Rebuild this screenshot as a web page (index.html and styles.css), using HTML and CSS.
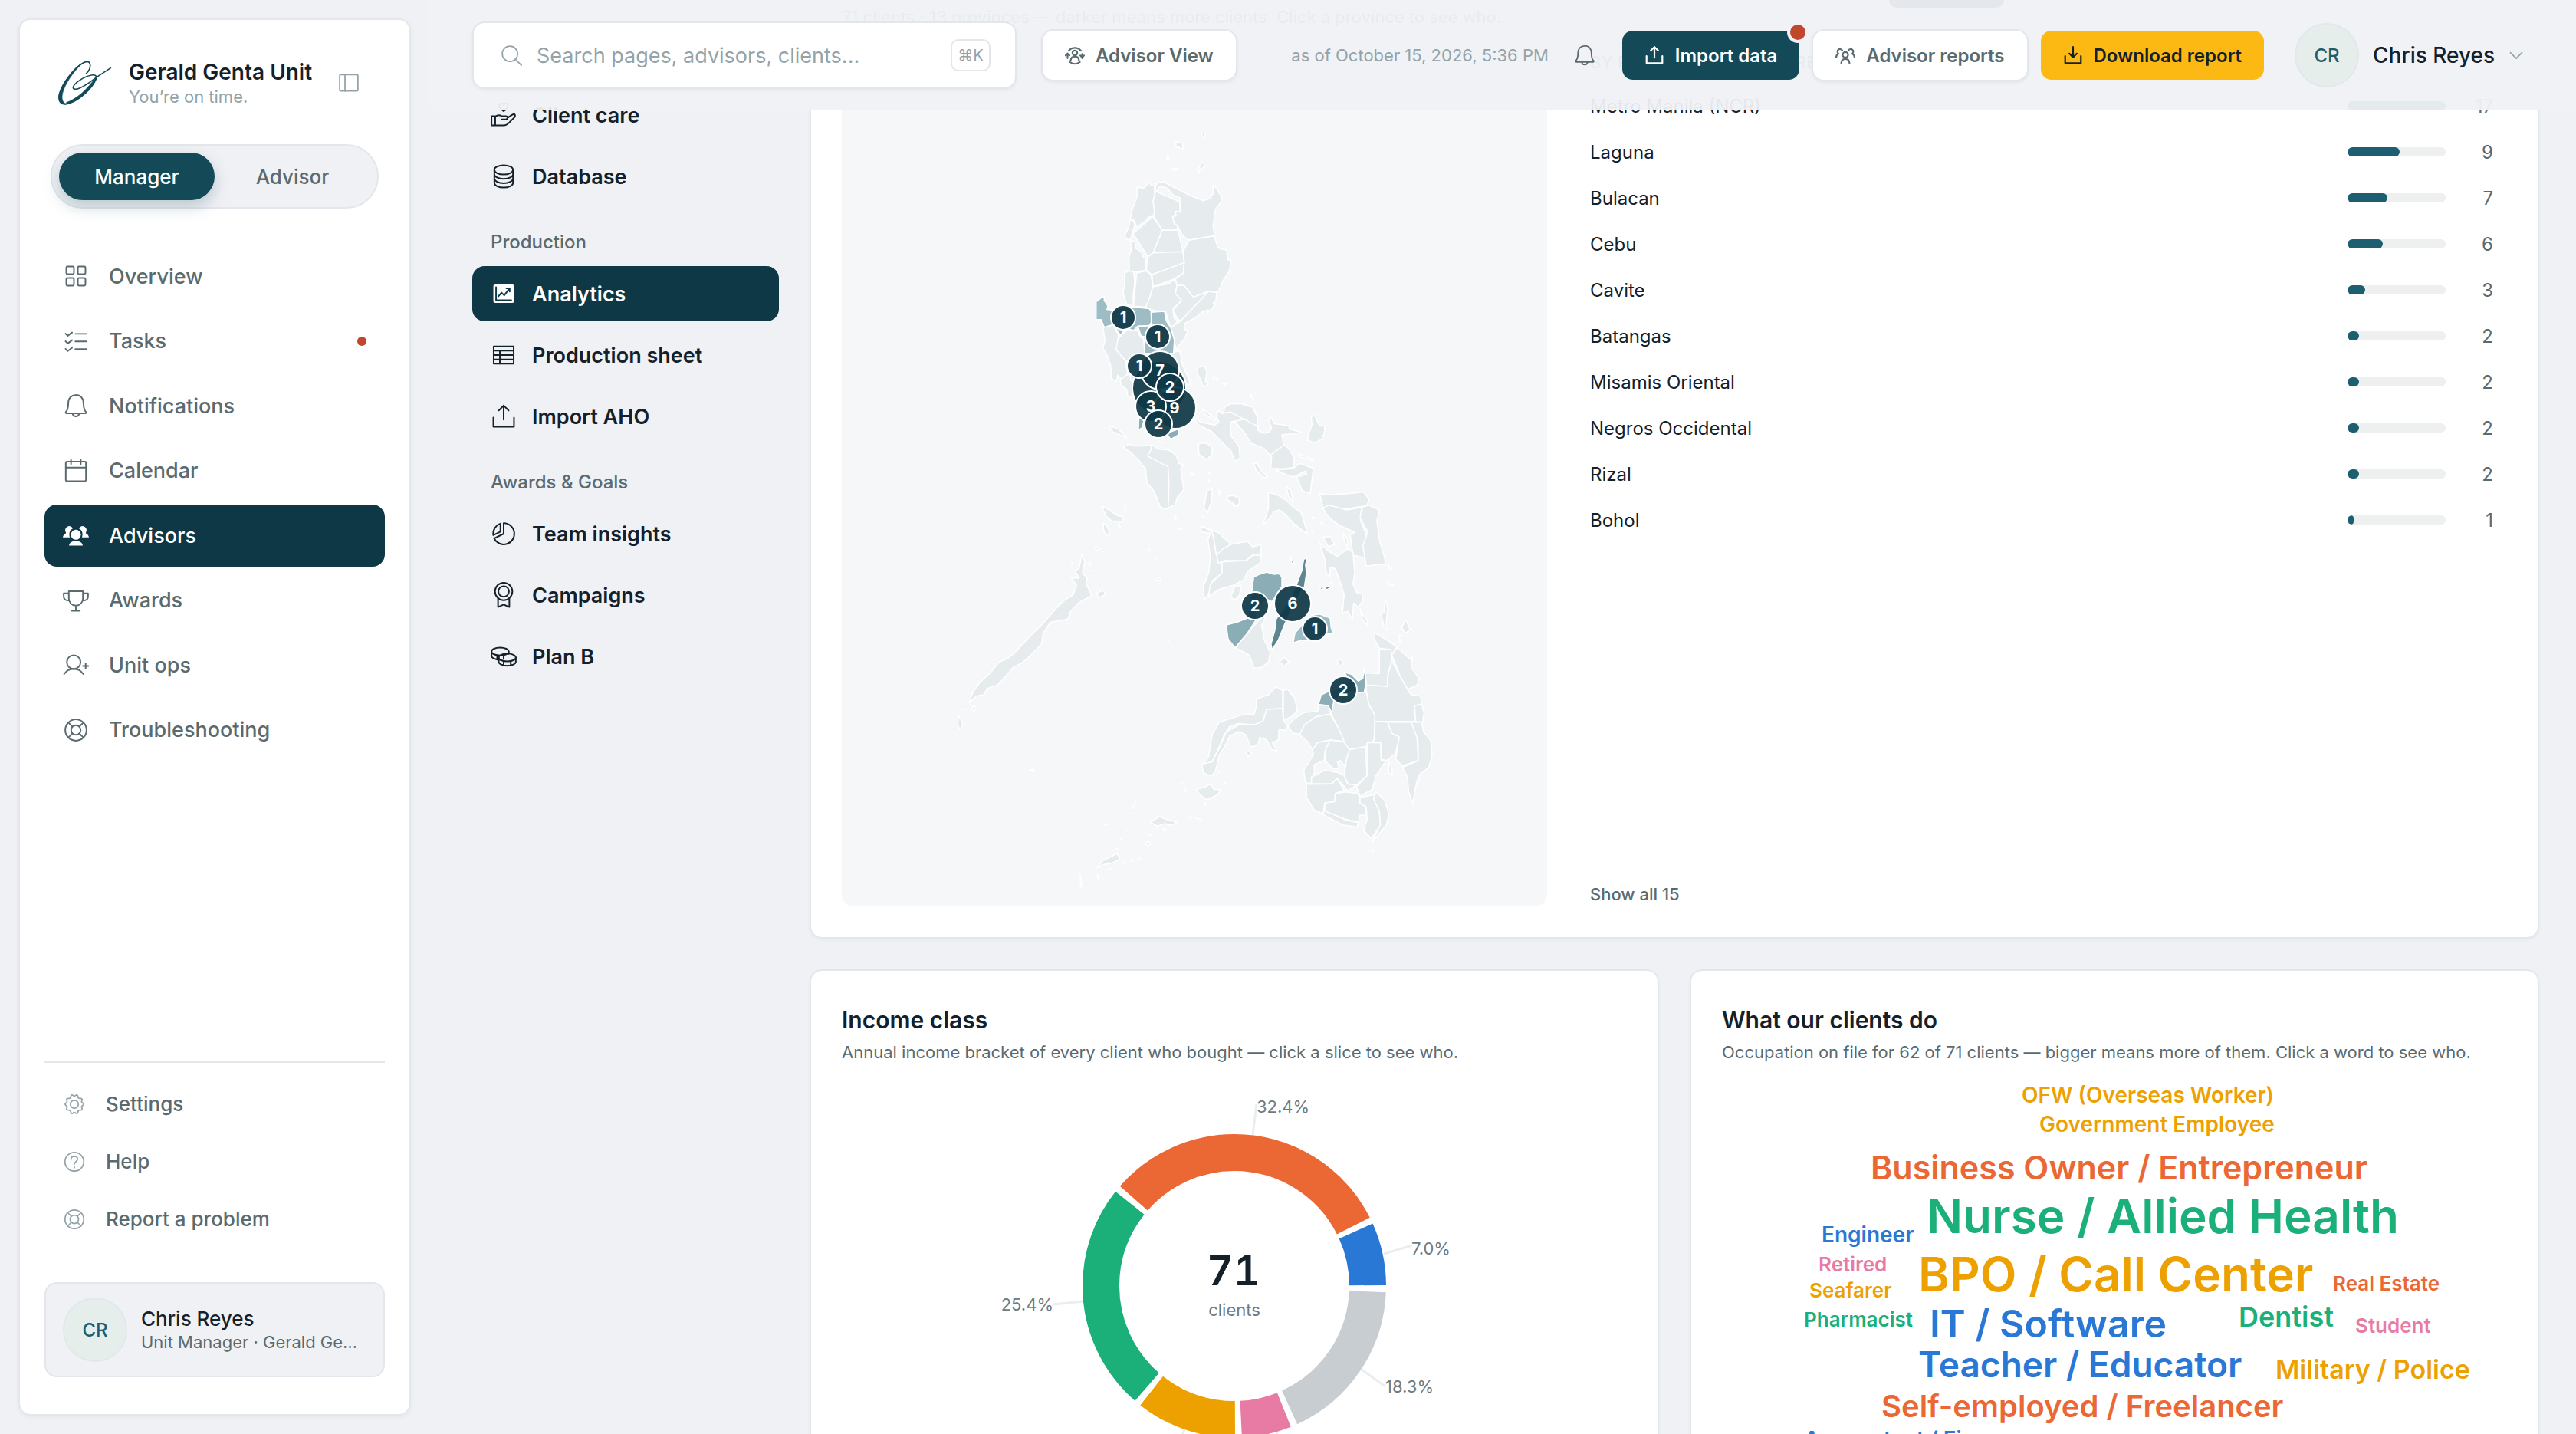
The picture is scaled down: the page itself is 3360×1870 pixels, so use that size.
FILE: index.html
```html
<!DOCTYPE html>
<html lang="en">
<head>
<meta charset="utf-8">
<meta name="viewport" content="width=device-width, initial-scale=1">
<title>Analytics · Gerald Genta Unit</title>
<link rel="stylesheet" href="styles.css">
</head>
<body>
<svg class="sprite" aria-hidden="true">
  <symbol id="i-panel" viewBox="0 0 24 24"><rect x="2.5" y="3.500" width="19" height="17" rx="1"/><path d="M8 3.500v17"/></symbol>
  <symbol id="i-grid" viewBox="0 0 24 24"><rect x="3.2" y="3.2" width="7" height="7" rx="1"/><rect x="13.8" y="3.2" width="7" height="7" rx="1"/><rect x="3.2" y="13.8" width="7" height="7" rx="1"/><rect x="13.8" y="13.8" width="7" height="7" rx="1"/></symbol>
  <symbol id="i-tasks" viewBox="0 0 24 24"><path d="M2.5 5l2 2 4-3M2.5 12l2 2 4-3M2.5 19l2 2 4-3M11.5 5.2H22M11.5 12.2H22M11.5 19.2H22"/></symbol>
  <symbol id="i-bell" viewBox="0 0 24 24"><path d="M12 2.2c-4.4 0-7 3.2-7 7.4 0 4.4-.8 7-2.300 8.200-.3.9 0 1.300.7 1.300h17.200c.7 0 1-.4.7-1.300-1.500-1.200-2.300-3.800-2.300-8.200 0-4.200-2.600-7.400-7-7.400zM9 19.600c.4 1.500 1.500 2.300 3 2.300s2.600-.8 3-2.300"/></symbol>
  <symbol id="i-cal" viewBox="0 0 24 24"><rect x="2.700" y="3.500" width="18.600" height="18" rx="1"/><path d="M2.700 9h18.600M7.500 1.800v4M16.500 1.800v4"/></symbol>
  <symbol id="i-people-fill" viewBox="0 0 24 24"><g fill="currentColor" stroke="none"><circle cx="12" cy="11.500" r="4.600"/><path d="M5.700 21.500c.3-2.600 3-4.300 6.300-4.300s6 1.700 6.300 4.300z"/><path d="M5.500 3.500a4 4 0 0 1 3.600 2.300A6 6 0 0 0 6 11.800c0 .8.200 1.500.4 2.200H0c.2-2 1.300-3.300 3-4A4 4 0 0 1 5.500 3.500zM18.500 3.500a4 4 0 0 0-3.600 2.300 6 6 0 0 1 3.100 6c0 .8-.2 1.500-.4 2.200H24c-.2-2-1.300-3.300-3-4a4 4 0 0 0-2.500-6.500z"/></g></symbol>
  <symbol id="i-people" viewBox="0 0 24 24"><circle cx="12" cy="11.500" r="3.300"/><path d="M7 21.500c.3-3.300 2.200-5 5-5s4.700 1.700 5 5M8.300 6.200a3.100 3.100 0 1 0-4.500 4C2 11 1 12.500 1 14.500M15.700 6.200a3.100 3.100 0 1 1 4.500 4c1.800.8 2.800 2.300 2.800 4.300"/></symbol>
  <symbol id="i-trophy" viewBox="0 0 24 24"><path d="M5.500 3.500h13v6.800a6.500 6.500 0 0 1-13 0zM5.500 5.500H.8v3c0 2.500 2 3.700 5 3.500M18.500 5.500h4.700v3c0 2.500-2 3.700-5 3.500M12 17v4.500M8.300 21.500h7.400"/></symbol>
  <symbol id="i-userplus" viewBox="0 0 24 24"><circle cx="10" cy="9.500" r="6.300"/><path d="M1.200 20.500c2-3 5-4.800 8.800-4.800s6.800 1.800 8.800 4.800M18.500 13h5M21 10.500v5"/></symbol>
  <symbol id="i-buoy" viewBox="0 0 24 24"><circle cx="12" cy="12" r="9.800"/><circle cx="12" cy="12" r="4.400"/><path d="M5 5l3.800 3.800M19 5l-3.800 3.800M5 19l3.800-3.800M19 19l-3.800-3.800"/></symbol>
  <symbol id="i-gear" viewBox="0 0 24 24"><circle cx="12" cy="12" r="4.200"/><path d="M9.300 2.300c1-.4 1.700 1.300 2.700 1.300s1.700-1.700 2.700-1.300c1.500.6.800 2.600 1.700 3.300s2.700-.4 3.600.8c.8 1-.8 2-.4 3.200s2.100 1.400 2.100 2.400-1.700 1.200-2.100 2.400 1.200 2.200.4 3.200c-.9 1.200-2.700.1-3.600.8s-.2 2.700-1.700 3.300c-1 .4-1.700-1.300-2.700-1.300s-1.700 1.700-2.700 1.300c-1.500-.6-.8-2.600-1.700-3.300s-2.700.4-3.600-.8c-.8-1 .8-2 .4-3.200S2.300 13 2.300 12s1.700-1.200 2.100-2.400S3.200 7.400 4 6.400c.9-1.200 2.700-.1 3.600-.8s.2-2.700 1.700-3.300z"/></symbol>
  <symbol id="i-help" viewBox="0 0 24 24"><circle cx="12" cy="12" r="9.800"/><path d="M8.600 9.500c0-2 1.400-3.300 3.400-3.300s3.400 1.200 3.400 3c0 2.300-3.200 2.600-3.400 5.300M12 17.300v.9"/></symbol>
  <symbol id="i-search" viewBox="0 0 24 24"><circle cx="10.500" cy="10.500" r="8"/><path d="M16.500 16.500l6 6"/></symbol>
  <symbol id="i-switch" viewBox="0 0 24 24"><circle cx="12" cy="9.300" r="2.900"/><path d="M7 18.300c.3-3.200 2.300-4.800 5-4.800s4.700 1.600 5 4.800M4.800 6.500A9.300 9.300 0 0 1 19.200 6.500M6 20.200a10 10 0 0 0 12 0M3.200 15.500V10.500M20.800 15.500V10.500M.9 12.300l2.300-2.500 2.300 2.500M18.500 12.300l2.300 2.500 2.300-2.500"/></symbol>
  <symbol id="i-upload" viewBox="0 0 24 24"><path d="M2.500 13v8.500h19V13M12 15V2M7.500 6.500L12 2l4.500 4.500"/></symbol>
  <symbol id="i-download" viewBox="0 0 24 24"><path d="M2.500 13v8.500h19V13M12 2v12.500M7.500 10l4.500 4.500 4.500-4.500"/></symbol>
  <symbol id="i-chev" viewBox="0 0 24 24"><path d="M3 8l9 9 9-9"/></symbol>
  <symbol id="i-care" viewBox="0 0 24 24"><path d="M12 8.500C9.500 6.500 8 5 8 3.300 8 1 11 .5 12 2.800 13 .5 16 1 16 3.300c0 1.700-1.500 3.200-4 5.200zM.8 13h3.400v8.500H.8zM4.200 13.500c2-1.500 4-1.800 5.800-.5h4c2 0 2 3 0 3h-4M15.500 14.500l4.700-3c2-1 3.200 1 1.800 2.500l-5.500 5.500c-1.300 1.300-2.500 2-4.500 2H4.200"/></symbol>
  <symbol id="i-db" viewBox="0 0 24 24"><ellipse cx="12" cy="6" rx="8.600" ry="4.300"/><path d="M3.400 6v12c0 2.400 3.800 4.300 8.600 4.300s8.600-1.900 8.600-4.300V6M3.400 10c0 2.400 3.800 4.300 8.600 4.300s8.600-1.900 8.600-4.300M3.400 14c0 2.400 3.800 4.300 8.600 4.300s8.600-1.900 8.600-4.300"/></symbol>
  <symbol id="i-chart" viewBox="0 0 24 24"><rect x="2.500" y="3.500" width="19" height="17" rx="1.500" fill="currentColor" stroke="none"/><path stroke="#0f3846" d="M5 6v12h14M7 14.500l3-3.500 2.500 2.500 5-6.500M14.500 7h3v3"/></symbol>
  <symbol id="i-sheet" viewBox="0 0 24 24"><rect x="2.800" y="4" width="18.400" height="16"/><path d="M2.800 8h18.400M2.800 12h18.400M2.800 16h18.400M8.500 8v12"/></symbol>
  <symbol id="i-pie" viewBox="0 0 24 24"><path d="M12 2.200a9.800 9.800 0 1 1-8.800 14.100L12 12zM9 2.700v7.500L2.400 13.300A9.800 9.800 0 0 1 9 2.700z"/></symbol>
  <symbol id="i-ribbon" viewBox="0 0 24 24"><circle cx="12" cy="8.700" r="8"/><circle cx="12" cy="8.700" r="4.900"/><path d="M6.800 15v8l5.200-2.300 5.200 2.300v-8"/></symbol>
  <symbol id="i-coins" viewBox="0 0 24 24"><ellipse cx="8.700" cy="7.500" rx="7.900" ry="3.600"/><path d="M.8 7.500v4c0 2 3.500 3.600 7.900 3.600M16.600 7.500v2.200M6 11v4M12 11v3"/><ellipse cx="15.300" cy="13" rx="7.900" ry="3.600"/><path d="M7.400 13v4c0 2 3.500 3.600 7.900 3.600s7.900-1.600 7.900-3.600v-4M12 16.500v4M18.500 16.500v4"/></symbol>
</svg>

<div class="app">
  <aside class="sidebar">
    <div class="brand">
      <svg class="logo" viewBox="30 30 216 180" aria-hidden="true">
        <path d="M140 83C150 75 158 58 154 45 151 34 138 36 126 43 95 60 45 120 34 165 28 195 42 206 62 203 110 195 165 140 180 100 180 90 172 88 160 90 130 95 92 122 88 137 88 148 102 146 115 140 140 130 165 110 180 98L235 62"/>
        <path class="logo-fill" d="M126 43C92 72 54 126 46 165 42 188 50 198 62 203 42 206 28 195 34 165 45 120 95 60 126 43ZM62 203C110 195 165 140 180 100 162 112 130 172 62 197Z"/>
      </svg>
      <div class="brand-text">
        <strong>Gerald Genta Unit</strong>
        <span>You’re on time.</span>
      </div>
      <button class="icon-btn" type="button" aria-label="Collapse sidebar"><svg class="icon-30"><use href="#i-panel"/></svg></button>
    </div>
    <div class="switch">
      <button type="button" class="switch-opt is-on">Manager</button>
      <button type="button" class="switch-opt">Advisor</button>
    </div>
    <nav class="nav" aria-label="Main">
      <a href="#"><svg><use href="#i-grid"/></svg>Overview</a>
      <a href="#"><svg><use href="#i-tasks"/></svg>Tasks<i class="dot"></i></a>
      <a href="#"><svg><use href="#i-bell"/></svg>Notifications</a>
      <a href="#"><svg><use href="#i-cal"/></svg>Calendar</a>
      <a href="#" class="is-active"><svg><use href="#i-people-fill"/></svg>Advisors</a>
      <a href="#"><svg><use href="#i-trophy"/></svg>Awards</a>
      <a href="#"><svg><use href="#i-userplus"/></svg>Unit ops</a>
      <a href="#"><svg><use href="#i-buoy"/></svg>Troubleshooting</a>
    </nav>
    <nav class="nav-foot" aria-label="Support">
      <a href="#"><svg><use href="#i-gear"/></svg>Settings</a>
      <a href="#"><svg><use href="#i-help"/></svg>Help</a>
      <a href="#"><svg><use href="#i-buoy"/></svg>Report a problem</a>
    </nav>
    <div class="me">
      <span class="avatar">CR</span>
      <div class="me-text"><strong>Chris Reyes</strong><span>Unit Manager · Gerald Genta Unit</span></div>
    </div>
  </aside>

  <header class="topbar">
    <label class="search">
      <svg class="icon-30"><use href="#i-search"/></svg>
      <input type="search" placeholder="Search pages, advisors, clients..." aria-label="Search">
      <kbd>⌘K</kbd>
    </label>
    <button type="button" class="btn"><svg><use href="#i-switch"/></svg>Advisor View</button>
    <span class="asof">as of October 15, 2026, 5:36 PM</span>
    <button type="button" class="icon-btn bell" aria-label="Notifications"><svg class="icon-30"><use href="#i-bell"/></svg></button>
    <div class="actions">
      <button type="button" class="btn btn-dark"><svg><use href="#i-upload"/></svg>Import data<i class="badge"></i></button>
      <button type="button" class="btn"><svg><use href="#i-people"/></svg>Advisor reports</button>
      <button type="button" class="btn btn-gold"><svg><use href="#i-download"/></svg>Download report</button>
    </div>
    <button type="button" class="profile"><span class="avatar">CR</span>Chris Reyes<svg class="chev"><use href="#i-chev"/></svg></button>
  </header>

  <div class="content">
    <nav class="subnav" aria-label="Advisors">
      <a href="#"><svg><use href="#i-care"/></svg>Client care</a>
      <a href="#"><svg><use href="#i-db"/></svg>Database</a>
      <h2>Production</h2>
      <a href="#" class="is-active"><svg><use href="#i-chart"/></svg>Analytics</a>
      <a href="#"><svg><use href="#i-sheet"/></svg>Production sheet</a>
      <a href="#"><svg><use href="#i-upload"/></svg>Import AHO</a>
      <h2>Awards &amp; Goals</h2>
      <a href="#"><svg><use href="#i-pie"/></svg>Team insights</a>
      <a href="#"><svg><use href="#i-ribbon"/></svg>Campaigns</a>
      <a href="#"><svg><use href="#i-coins"/></svg>Plan B</a>
    </nav>

    <main class="cards">
      <section class="card card-map">
        <div class="map-head">
          <p class="sub">71 clients · 13 provinces — darker means more clients. Click a province to see who.</p>
          <span class="tab"></span>
        </div>
        <div class="map-body">
          <svg class="map" viewBox="0 0 920 1128" role="img" aria-label="Clients by province">
            <g class="land" transform="translate(2 86) scale(.58675 .35714)">
              <path d="M796 95l6-3 3 6-2 10-5-3zM739 126l8 3 7 2 1 20-6-2-4-5-5 1zM720 174l4 10-2 12-2-8zM728 226l8-4 11 2-4 4-14 2zM797 200l6 8-4 14-6 4-2 10-3-6 4-12z"/>
              <path d="M653 292L668 295 675 283 678 270 684 284 692 288 692 330 690 360 693 397 680 400 668 420 660 428 652 438 647 412 638 410 641 380 648 350 653 325Z"/>
              <path d="M694 306L748 345 749 380 738 382 740 395 732 400 736 425 742 430 744 448 709 449 690 397 692 370 688 345Z"/>
              <path d="M694 285L700 275 712 272 730 288 750 305 775 325 800 340 815 333 822 315 822 284 830 295 835 312 842 325 840 345 828 370 825 400 822 430 825 468 800 476 768 485 755 470 748 448 742 430 736 425 732 400 740 395 738 380 749 380 748 330 733 320 720 295 710 288 700 292 698 306 694 306Z"/>
              <path d="M688 399L709 449 689 531 677 546 644 461Z"/>
              <path d="M709 449L744 448 755 527 689 531Z"/>
              <path d="M638 410L646 415 648 432 642 460 638 484 628 480 626 465 634 440Z"/>
              <path d="M638 487L648 490 650 515 662 525 666 545 673 552 673 595 652 600 636 597 635 545 640 520Z"/>
              <path d="M677 546L689 531 755 527 758 567 686 611 674 595 675 560Z"/>
              <path d="M758 567L756 605 735 627 689 655 686 611Z"/>
              <path d="M768 485L825 470 832 510 840 518 852 520 854 555 862 560 858 600 845 630 833 676 810 672 778 693 757 650 742 650 738 627 756 605 758 567 755 527Z"/>
              <path d="M625 605L636 597 645 600 648 640 644 690 645 725 630 718 622 680 626 640Z"/>
              <path d="M652 605L673 597 684 611 688 655 682 690 673 730 645 725 649 660Z"/>
              <path d="M688 655L722 645 737 627 742 650 738 672 752 705 733 735 735 770 745 780 728 805 716 745 690 742 672 730 682 690Z"/>
              <path d="M742 650L757 650 778 693 812 672 750 780 742 770 733 740 752 705 738 680Z"/>
              <path d="M812 672L830 676 828 710 822 715 826 722 808 755 812 740 800 745 780 770 758 790 758 810 766 815 760 840 748 865 740 885 735 850 728 805 750 780Z"/>
              <path d="M618 833L632 810 655 815 660 838 668 845 670 900 650 930 627 925 606 885 608 850Z"/>
              <path d="M577 803L600 795 612 833 606 885 627 925 632 975 620 995 610 978 607 1000 596 990 594 940 585 900 577 880 582 850Z"/>
              <path d="M615 995L632 975 700 980 700 1055 632 1055 630 1030 618 1015Z"/>
              <path d="M630 925L748 890 754 940 770 1000 772 1012 760 1010 756 1020 760 1060 640 1000Z"/>
              <path d="M787 950L803 945 808 965 805 1000 810 1012 800 1020 795 995 788 975ZM820 984l8 4 5 10-10-6zM842 1008l11 1-6 5zM906 1048l6 15-5-4z"/>
              <path d="M798 1100l10 12 20 28-4 2-20-22z"/>
              <path d="M775 1130L795 1150 825 1160 835 1150 829 1125 834 1108 845 1118 848 1095 862 1082 885 1082 910 1095 920 1130 922 1180 935 1190 948 1185 952 1170 945 1140 950 1130 958 1155 990 1162 992 1175 1018 1185 1005 1192 975 1195 978 1230 990 1245 1003 1280 1000 1315 975 1320 950 1318 952 1275 935 1245 905 1225 895 1195 870 1145 860 1150 862 1200 880 1240 882 1280 870 1293 862 1255 840 1220 820 1185 790 1160Z"/>
              <path class="line" d="M840 1118L860 1112 890 1138 922 1165M860 1150L892 1138M948 1272L980 1232"/>
              <path d="M960 1325L1000 1318 1015 1300 1045 1318 1038 1410 1020 1400 1008 1350 1030 1340 1028 1328 1000 1350ZM1012 1265l30 20 5 6-30-14z"/>
              <path d="M1040 1130L1048 1125 1058 1160 1070 1165 1070 1180 1065 1210 1048 1225 1032 1215 1035 1190 1042 1160Z"/>
              <path d="M790 1228L805 1225 820 1240 820 1265 808 1287 790 1265Z"/>
              <path d="M622 1240L635 1230 650 1237 680 1235 686 1232 700 1248 722 1250 740 1270 746 1300 756 1305 750 1320 757 1395 742 1425 738 1450 718 1466 705 1460 692 1405 675 1370 672 1320 655 1285 640 1262Z"/>
              <path class="line" d="M685 1235L684 1250 676 1273 722 1312 724 1380 722 1462"/>
              <path d="M590 1162L612 1175 630 1207 610 1192 600 1186ZM702 1220l6 6-4-2z"/>
              <path d="M912 1300L920 1300 930 1330 943 1350 935 1352 918 1325ZM985 1385l10 15 5 40-10-20zM808 1400l12-8-2 48-8 40-8-15zM834 1395l6 20-4 2zM855 1425l10-7 15 12-2 25-10 0zM772 1335l6 4-4 4zM812 1330l4 6-4 3zM811 1358l4 3-3 4z"/>
              <path d="M945 1405L965 1415 985 1435 1000 1460 1018 1480 1032 1558 1005 1525 985 1490 970 1470 958 1475 948 1500 933 1525 945 1465Z"/>
              <g class="c1">
                <path d="M562 775L562 710 574 695 580 690 580 705 588 725 586 738 596 740 640 728 680 735 686 750 688 775 680 797 655 798 645 815 628 805 616 833 608 812 600 793 580 803 573 775Z"/>
                <path d="M684 748L714 745 718 780 728 805 736 850 734 898 670 898 668 840 672 820 685 795Z"/>
                <path d="M655 800L680 797 672 838 662 835Z"/>
              </g>
              <path class="c2" d="M657 1130L668 1145 664 1170 656 1178ZM718 1190L745 1175 745 1195 728 1212Z"/>
            </g>

            <g class="land" transform="translate(102 586) scale(.45918 .35714)">
              <path d="M1135 10L1160 15 1220 10 1260 4 1275 30 1270 55 1215 65 1145 60Z"/>
              <path d="M1145 65L1160 52 1213 70 1255 60 1252 110 1270 170 1265 245 1230 235 1222 160 1235 152 1190 125 1160 95Z"/>
              <path d="M1255 60L1275 52 1305 70 1298 110 1305 180 1320 245 1322 270 1300 270 1268 275 1258 200 1272 150 1250 100Z"/>
              <path d="M1330 270l10 20-8-6zM1325 330l8 10 14 4-8 5zM1112 100l6-4 2 6zM1135 118l8-3 3 10zM1203 155l10 20 2 30-10-20z"/>
              <path d="M515 55L535 68 560 90 578 95 575 112 545 110 530 95ZM520 118l10 8 8 25-8 14-8-20zM565 115l4 20-4-4zM498 205l14 6-12 6zM580 55l5 15M560 210l2 2M650 210l3 6M628 236l3 3M668 245l4 8M672 325l8-8 4 6-8 8zM703 552l4-4"/>
              <path d="M460 228L468 260 462 300 475 320 472 340 488 382 450 410 428 440 420 468 370 480 350 520 345 560 315 600 290 628 265 645 235 690 220 710 190 722 183 745 160 750 140 775 150 735 170 700 200 665 225 625 250 612 270 590 310 535 345 490 370 455 390 425 410 400 435 380 445 345 430 318 452 320 440 290 452 285Z"/>
              <path d="M110 820L122 850 115 875 107 855ZM152 783l8 12-6 10-6-6zM126 798l4 3M500 375l20-12 8 15-18 12zM312 1020l12-3 1 8zM430 260l6 8M478 262l10 6-6 6zM482 290l8 4"/>
              <path d="M798 130L830 145 835 180 842 235 855 260 858 300 830 330 820 375 808 398 805 350 820 300 825 240 818 180 825 155 800 150Z"/>
              <path d="M805 132L850 155 870 180 885 195 860 215 842 235 835 180 830 150Z"/>
              <path d="M885 195L930 185 945 205 970 195 968 235 945 235 925 255 865 255 848 265 842 235 860 212Z"/>
              <path d="M858 260L925 255 950 235 970 235 965 265 930 295 920 325 890 345 850 360 820 385 825 340 858 300Z"/>
              <path d="M895 350L912 345 908 380 895 398 882 388ZM874 20l15-3 18 10 0 20-10 8-12-14-12-8zM722 88l6 8-2 12zM733 137l14 0-10 4zM803 92l4 8"/>
              <path d="M1000 405L990 440 970 490 978 545 995 590 990 625 970 645 950 648 935 600 895 573 930 520 965 470Z"/>
              <path d="M1020 625L1035 608 1048 625 1035 640ZM1185 620l10-5 8 17-11 8zM1145 170l20-4 13 30-18 8z"/>
              <path d="M1135 190L1160 220 1185 240 1215 212 1230 225 1235 300 1230 340 1240 372 1256 375 1258 400 1245 425 1232 410 1228 470 1215 440 1200 445 1205 380 1190 320 1180 285 1165 280 1165 312 1155 305 1150 250Z"/>
              <path d="M1250 430l8 25 12 15 2 22-16-25zM1322 395l6 35-4 60 5 20-10-10-9-50 8-5zM1380 470l12 35-12 15-12-20zM1362 525l6 12-5 15zM1112 150l3 4M1060 125l3 4"/>
              <path d="M1292 518L1320 540 1355 570 1340 600 1335 580 1305 575 1292 545Z"/>
              <path d="M1305 578L1338 580 1340 620 1328 680 1328 715 1268 710 1265 665 1305 668Z"/>
              <path d="M1340 600L1355 572 1395 618 1400 602 1395 645 1418 685 1412 710 1385 725 1365 680 1350 630Z"/>
              <path d="M1340 620L1365 680 1385 725 1395 745 1422 750 1425 780 1405 785 1408 842 1290 842 1292 820 1275 780 1268 735 1268 710 1328 715 1328 680Z"/>
              <path d="M1405 785L1425 780 1432 810 1428 845 1408 842Z"/>
              <path d="M1395 845L1425 845 1430 880 1450 910 1455 965 1445 1010 1420 1035 1412 1060 1405 1100 1400 1140 1388 1100 1385 1045 1370 1010 1415 985 1415 920Z"/>
              <path d="M1328 845L1395 845 1412 900 1415 985 1370 1005 1352 980 1360 900 1340 885Z"/>
              <path d="M1292 842L1328 845 1340 885 1362 900 1350 960 1325 985 1310 980 1308 920 1280 915 1292 905Z"/>
              <path d="M1168 815L1172 770 1240 735 1268 735 1275 780 1292 820 1290 910 1265 935 1220 945 1205 920 1190 870Z"/>
              <path d="M1045 860L1060 835 1090 810 1130 805 1132 782 1160 785 1168 815 1125 825 1095 855 1090 890 1060 885Z"/>
              <path d="M1092 855L1125 825 1165 815 1190 870 1205 915 1165 910 1130 920 1115 945 1100 915 1078 890Z"/>
              <path d="M1032 728L1045 725 1065 760 1072 805 1055 825 1032 838Z"/>
              <path d="M955 760L990 745 1012 715 1030 730 1030 795 985 798 975 840 950 855 905 850 880 860 865 890 850 935 830 990 805 998 820 970 830 890 850 845 910 820 950 815 955 790Z"/>
              <path d="M985 798L1030 795 1032 838 1045 860 1040 875 1020 870 1018 910 1000 920 1015 950 1000 945 985 910 965 900 960 930 940 935 925 890 905 880 880 895 865 935 850 965 840 1020 828 1042 805 1030 800 998 830 990 852 935 870 880 905 855 950 855 975 840Z"/>
              <path d="M930 945l12 12-8 14-7-14z"/>
              <path d="M1115 945L1130 920 1165 910 1150 960 1148 985 1120 1000 1120 1030 1110 1070 1095 1065 1090 1020 1105 990 1118 960Z"/>
              <path d="M1165 910L1205 918 1220 945 1212 980 1205 1005 1195 985 1186 990 1190 1015 1175 1015 1150 985 1150 950Z"/>
              <path d="M1220 945L1265 935 1270 1040 1240 1075 1215 1070 1205 1040 1212 980Z"/>
              <path d="M1112 1045L1150 1020 1190 1030 1205 1040 1215 1070 1240 1075 1215 1095 1185 1050 1170 1070 1112 1070Z"/>
              <path d="M1270 920L1308 920 1310 985 1325 985 1295 1040 1285 1090 1250 1115 1240 1080 1270 1040Z"/>
              <path d="M1098 1072L1170 1070 1185 1050 1205 1095 1180 1105 1178 1135 1150 1140 1145 1180 1120 1165 1098 1120Z"/>
              <path d="M1180 1105L1210 1100 1245 1105 1250 1140 1268 1155 1265 1185 1250 1185 1245 1210 1210 1200 1150 1170 1150 1140 1178 1135Z"/>
              <path d="M1148 1168L1210 1202 1245 1212 1242 1228 1200 1220 1145 1182Z"/>
              <path d="M1250 1120L1290 1110 1305 1170 1308 1220 1282 1270 1260 1240 1270 1200 1268 1155 1250 1140Z"/>
              <path d="M1295 1100L1320 1130 1332 1180 1325 1220 1285 1282 1308 1220 1305 1170 1288 1125Z"/>
              <path d="M1332 990l8 20 2 30-10-10zM1283 1310l6 3-4 5zM1298 1300l3 8M1416 1045l3 10"/>
              <path d="M785 1090L810 1082 825 1070 835 1090 855 1092 845 1110 815 1128 795 1110ZM750 1080l6 20M740 1070l5-4M865 1065l4 4M845 1030l6-4M810 1140l4 8-6-2z"/>
              <path d="M655 1210L680 1190 700 1200 730 1210 715 1222 695 1215 675 1225ZM765 1195l12-4M780 1195l20 6M690 1235l8 2-4 6zM645 1255l14 4M640 1288l8-8 8 8-6 8zM592 1178l6 3M605 1160l8-28M628 1130l5 2M524 1222l10-4M544 1215l4 4M570 1272l3 4M588 1240l3 5M556 1305l8 4"/>
              <path d="M500 1378L520 1350 560 1325 568 1345 545 1360 520 1365ZM598 1352l10-4M618 1345l8-3M572 1360l10-6M530 1385l14-6M455 1402q8 20 2 46-2-20-2-46zM504 1400l6 12-4 10z"/>
              <path class="c2" d="M948 315L965 305 985 297 1005 305 1020 303 1028 315 1028 350 1000 405 985 395 955 440 955 470 930 520 895 573 875 540 870 490 900 480 930 465 943 365Z"/>
              <path class="c2" d="M1205 663L1225 670 1245 695 1258 685 1262 648 1267 700 1262 735 1200 740 1175 770 1170 810 1160 785 1132 780 1140 745 1165 730 1200 720 1220 690Z"/>
              <path class="c6" d="M1090 250L1100 245 1095 270 1098 300 1092 350 1060 420 1035 490 1018 545 1000 580 997 560 1008 510 1012 468 1050 400 1072 335 1085 290ZM1053 245l3 8 8 10-8 2zM1133 366l8-16 8 4zM1150 355l10-8 4 8-8 6zM1164 340l4-8"/>
              <path class="c1" d="M1065 520L1085 490 1112 455 1135 450 1165 465 1168 500 1175 520 1150 525 1110 548 1085 545 1060 555Z"/>
            </g>

            <g class="pins">
              <circle cx="414" cy="452" r="35"/>
              <circle cx="435" cy="478" r="27"/><text x="434" y="485">9</text>
              <circle cx="415" cy="429" r="25"/><text x="415" y="436">7</text>
              <circle cx="588" cy="733" r="24"/><text x="588" y="740">6</text>
              <circle cx="403" cy="476" r="20"/><text x="403" y="483">3</text>
              <circle cx="428" cy="451" r="18"/><text x="428" y="458">2</text>
              <circle cx="413" cy="499" r="18"/><text x="413" y="506">2</text>
              <circle cx="539" cy="736" r="18"/><text x="539" y="743">2</text>
              <circle cx="654" cy="846" r="18"/><text x="654" y="853">2</text>
              <circle cx="367" cy="360" r="16"/><text x="367" y="367">1</text>
              <circle cx="412" cy="385" r="16"/><text x="412" y="392">1</text>
              <circle cx="388" cy="423" r="16"/><text x="388" y="430">1</text>
              <circle cx="617" cy="766" r="16"/><text x="617" y="773">1</text>
            </g>
          </svg>
          <div class="places">
            <h3>BY PROVINCE / METRO AREA</h3>
            <table>
              <tr><th scope="row">Metro Manila (NCR)</th><td><div class="bar"><i style="width:100%"></i></div></td><td>17</td></tr>
              <tr><th scope="row">Laguna</th><td><div class="bar"><i style="width:53%"></i></div></td><td>9</td></tr>
              <tr><th scope="row">Bulacan</th><td><div class="bar"><i style="width:41%"></i></div></td><td>7</td></tr>
              <tr><th scope="row">Cebu</th><td><div class="bar"><i style="width:36%"></i></div></td><td>6</td></tr>
              <tr><th scope="row">Cavite</th><td><div class="bar"><i style="width:18%"></i></div></td><td>3</td></tr>
              <tr><th scope="row">Batangas</th><td><div class="bar"><i style="width:12%"></i></div></td><td>2</td></tr>
              <tr><th scope="row">Misamis Oriental</th><td><div class="bar"><i style="width:12%"></i></div></td><td>2</td></tr>
              <tr><th scope="row">Negros Occidental</th><td><div class="bar"><i style="width:12%"></i></div></td><td>2</td></tr>
              <tr><th scope="row">Rizal</th><td><div class="bar"><i style="width:12%"></i></div></td><td>2</td></tr>
              <tr><th scope="row">Bohol</th><td><div class="bar"><i style="width:6%"></i></div></td><td>1</td></tr>
            </table>
            <button type="button" class="more">Show all 15</button>
          </div>
        </div>
      </section>

      <div class="pair">
        <section class="card">
          <h2>Income class</h2>
          <p class="sub">Annual income bracket of every client who bought — click a slice to see who.</p>
          <svg class="chart" viewBox="0 0 1024 620" role="img" aria-label="Income class donut chart">
            <g class="leaders"><path d="M536 80L541 40M707 235L744 224M678 386L709 408M315 297L276 301M447 464L437 494M567 467L576 497"/></g>
            <g class="donut" transform="translate(512 277) scale(1 -1)">
              <circle r="174" pathLength="360" stroke="#2a78d6" stroke-dasharray="24 336" stroke-dashoffset="-.3"/>
              <circle r="174" pathLength="360" stroke="#eb6834" stroke-dasharray="112.100 247.900" stroke-dashoffset="-26.800"/>
              <circle r="174" pathLength="360" stroke="#1baf7a" stroke-dasharray="87.600 272.400" stroke-dashoffset="-141.500"/>
              <circle r="174" pathLength="360" stroke="#eda100" stroke-dasharray="38.600 321.400" stroke-dashoffset="-231.700"/>
              <circle r="174" pathLength="360" stroke="#e87ba4" stroke-dasharray="19 341" stroke-dashoffset="-272.900"/>
              <circle r="174" pathLength="360" stroke="#c8cdd1" stroke-dasharray="63.100 296.900" stroke-dashoffset="-294.500"/>
            </g>
            <g class="pct">
              <text x="541" y="51">32.4%</text><text x="743" y="236">7.0%</text><text x="709" y="416">18.3%</text>
              <text x="276" y="309" text-anchor="end">25.4%</text><text x="437" y="512" text-anchor="end">11.3%</text><text x="576" y="515">5.6%</text>
            </g>
            <text class="total" x="511" y="276">71</text>
            <text class="total-label" x="512" y="316">clients</text>
          </svg>
        </section>
        <section class="card">
          <h2>What our clients do</h2>
          <p class="sub">Occupation on file for 62 of 71 clients — bigger means more of them. Click a word to see who.</p>
          <svg class="chart cloud" viewBox="0 0 1024 620" role="img" aria-label="Occupations word cloud">
            <g class="gold"><text class="s2" x="391" y="38">OFW (Overseas Worker)</text><text class="s2" x="414" y="76">Government Employee</text><text class="s1" x="114" y="292">Seafarer</text><text class="s9" x="256" y="284">BPO / Call Center</text><text class="s3" x="722" y="398">Military / Police</text></g>
            <g class="orange"><text class="s6" x="194" y="138">Business Owner / Entrepreneur</text><text class="s1" x="797" y="283">Real Estate</text><text class="s5" x="208" y="448">Self-employed / Freelancer</text></g>
            <g class="green"><text class="s9" x="267" y="208">Nurse / Allied Health</text><text class="s1" x="107" y="330">Pharmacist</text><text class="s4" x="674" y="330">Dentist</text></g>
            <g class="blue"><text class="s2" x="130" y="220">Engineer</text><text class="s8" x="271" y="344">IT / Software</text><text class="s7" x="256" y="396">Teacher / Educator</text><text class="s2" x="107" y="487">Accountant / Finance</text></g>
            <g class="pink"><text class="s1" x="126" y="258">Retired</text><text class="s1" x="826" y="338">Student</text></g>
          </svg>
        </section>
      </div>
    </main>
  </div>
</div>
</body>
</html>
```
FILE: styles.css
```css
* { box-sizing: border-box; }
:root {
  --bg: #f0f1f5;
  --line: #e3e7eb;
  --ink: #14212b;
  --muted: #5a6b70;
  --soft: #93a3a8;
  --deep: #0f3846;
  --teal: #144a58;
}
body {
  margin: 0;
  background: var(--bg);
  color: var(--ink);
  font-family: Inter, "Liberation Sans", sans-serif;
  font-size: 24px;
}
a { color: inherit; text-decoration: none; }
button { font: inherit; color: inherit; background: none; border: 0; padding: 0; }
h2, h3, p { margin: 0; }
i { font-style: normal; }
svg { fill: none; stroke: currentColor; stroke-width: 1.4; stroke-linecap: round; stroke-linejoin: round; flex: none; }
.sprite { position: absolute; width: 0; height: 0; }
.icon-30 { width: 30px; height: 30px; }
.icon-btn { display: flex; color: var(--soft); }

.app { display: grid; grid-template-columns: 536px 1fr; height: 100vh; }

/* Sidebar */
.sidebar {
  display: flex; flex-direction: column;
  margin: 24px 0 24px 24px; padding: 0 32px 48px;
  background: #fff; border: 2px solid var(--line); border-radius: 16px;
  box-shadow: 0 2px 6px rgba(20, 33, 43, .05);
}
.brand { display: flex; align-items: center; margin: 49px 0 47px; padding: 0 32px 0 18px; height: 66px; }
.logo { width: 72px; height: 60px; color: var(--teal); stroke-width: 5; }
.logo-fill { fill: currentColor; stroke-width: 2; }
.brand-text { display: flex; flex-direction: column; flex: 1; margin-left: 20px; white-space: nowrap; }
.brand-text strong { font-size: 28px; line-height: 36px; font-weight: 600; }
.brand-text span { font-size: 22px; line-height: 28px; color: var(--soft); }
.switch {
  display: flex; height: 84px; margin: 0 8px 48px; padding: 9px;
  background: var(--bg); border: 2px solid var(--line); border-radius: 42px;
}
.switch-opt { flex: 1; border-radius: 32px; font-size: 26px; font-weight: 500; color: var(--muted); }
.switch-opt.is-on { background: var(--teal); color: #fff; box-shadow: 0 8px 20px rgba(20, 74, 88, .25); }
.nav { display: grid; row-gap: 4px; min-height: 672px; }
.nav a, .nav-foot a, .subnav a { display: flex; align-items: center; }
.nav a { gap: 26px; padding: 0 24px; border-radius: 16px; font-size: 27px; font-weight: 500; color: var(--muted); }
.nav svg { width: 34px; height: 34px; }
.nav .is-active { background: var(--deep); color: #fff; }
.dot { width: 12px; height: 12px; margin-left: auto; border-radius: 50%; background: #c0472c; }
.nav-foot { margin-top: auto; padding-top: 16px; border-top: 2px solid var(--line); }
.nav-foot a { height: 75px; gap: 26px; padding: 0 24px; font-size: 26px; font-weight: 500; color: var(--muted); }
.nav-foot svg { width: 30px; height: 30px; color: var(--soft); }
.me {
  display: flex; align-items: center; gap: 18px; height: 124px; margin-top: 45px; padding: 0 22px;
  background: var(--bg); border: 2px solid var(--line); border-radius: 16px;
}
.avatar {
  display: flex; align-items: center; justify-content: center; flex: none;
  width: 84px; height: 84px; border-radius: 50%; border: 2px solid var(--line);
  background: #e6eeeb; color: #1d5f70; font-size: 24px; font-weight: 500;
}
.me-text { display: flex; flex-direction: column; min-width: 0; flex: 1; }
.me-text strong { font-size: 26px; line-height: 32px; font-weight: 500; }
.me-text span { font-size: 22px; line-height: 28px; color: var(--muted); overflow: hidden; white-space: nowrap; text-overflow: ellipsis; }

/* Top bar, lies over the scrolled content */
.topbar {
  position: absolute; z-index: 2; top: 0; left: 560px; right: 0; height: 144px;
  display: flex; align-items: center; padding: 0 68px 0 56px;
  background: rgba(240, 241, 245, .95);
}
.search {
  display: flex; align-items: center; gap: 18px; width: 710px; height: 88px; padding: 0 32px 0 34px;
  background: #fff; border: 2px solid var(--line); border-radius: 16px; color: var(--soft);
  box-shadow: 0 2px 4px rgba(20, 33, 43, .05);
}
.search input { flex: 1; min-width: 0; border: 0; outline: 0; padding: 0; background: none; font: inherit; font-size: 27px; }
.search input::placeholder { color: var(--soft); opacity: 1; }
.search kbd {
  display: grid; place-items: center; width: 52px; height: 42px;
  border: 2px solid var(--line); border-radius: 10px; font: inherit; font-size: 20px;
}
.btn {
  position: relative; display: flex; align-items: center; gap: 14px; height: 68px; padding: 0 29px;
  background: #fff; border: 2px solid var(--line); border-radius: 16px;
  font-weight: 600; color: var(--muted); white-space: nowrap; box-shadow: 0 2px 4px rgba(20, 33, 43, .06);
}
.btn svg { width: 26px; height: 26px; stroke-width: 2; }
.search + .btn { margin-left: 32px; }
.btn-dark { background: var(--teal); border-color: transparent; background-clip: padding-box; color: #fff; box-shadow: none; }
.btn-gold { background: #fdb913; border-color: transparent; background-clip: padding-box; color: var(--ink); box-shadow: none; }
.badge { position: absolute; top: -12px; right: -12px; width: 28px; height: 28px; border-radius: 50%; background: #c0472c; border: 4px solid var(--bg); }
.asof { margin-left: auto; font-size: 22px; color: var(--soft); white-space: nowrap; }
.bell { margin: 0 32px; color: var(--muted); }
.actions { display: flex; gap: 14px; }
.profile { display: flex; align-items: center; gap: 18px; margin-left: 38px; font-size: 28px; font-weight: 500; white-space: nowrap; }
.chev { width: 20px; height: 20px; color: var(--soft); stroke-width: 2; }

/* Content */
.content {
  display: grid; grid-template-columns: 400px 1fr; column-gap: 40px; align-items: start;
  padding: 0 48px 0 80px; overflow-y: auto; scrollbar-width: none;
}
.subnav { display: flex; flex-direction: column; gap: 8px; padding-top: 114px; }
.subnav a { height: 72px; gap: 20px; padding: 0 24px; border-radius: 16px; font-size: 27px; font-weight: 600; }
.subnav svg { width: 34px; height: 34px; }
.subnav .is-active { background: var(--deep); color: #fff; }
.subnav h2 { margin: 25px 24px 6px; font-size: 24px; line-height: 34px; font-weight: 500; color: var(--muted); }

.card { background: #fff; border: 2px solid var(--line); border-radius: 16px; padding: 40px; box-shadow: 0 2px 4px rgba(20, 33, 43, .04); }
.card h2 { font-size: 30px; line-height: 48px; font-weight: 600; }
.sub { font-size: 22px; line-height: 36px; color: var(--muted); }
.card-map { padding-top: 0; border-top: 0; border-radius: 0 0 16px 16px; }
.map-head { display: flex; justify-content: space-between; align-items: flex-start; height: 54px; padding-top: 4px; }
.tab { width: 150px; height: 10px; margin: -4px 656px 0 0; border-radius: 0 0 16px 16px; background: var(--deep); }
.map-body { display: grid; grid-template-columns: 920fr 1196fr; column-gap: 56px; }
.map { display: block; width: 100%; background: #f6f7f9; border-radius: 16px; }
.land path { fill: #e6ecee; stroke: #fff; stroke-width: 1.5; vector-effect: non-scaling-stroke; }
.land .line { fill: none; }
.land .c1, .land .c1 path { fill: #9dbcc4; }
.land .c2 { fill: #8aadb6; }
.land .c6 { fill: #5e8691; }
.pins circle { fill: var(--deep); fill-opacity: .93; stroke: #fff; stroke-width: 2; }
.pins text { fill: #fff; stroke: none; font-size: 20px; font-weight: 700; text-anchor: middle; }

.places { display: flex; flex-direction: column; align-items: flex-start; }
.places h3 { font-size: 22px; line-height: 54px; font-weight: 500; color: var(--muted); }
table { width: 100%; border-collapse: collapse; }
tr { height: 60px; }
th, td { padding: 0; text-align: left; font-weight: 400; }
td:nth-child(2) { width: 128px; }
td:last-child { width: 80px; padding-right: 18px; text-align: right; color: var(--muted); }
.bar { height: 12px; border-radius: 6px; background: #eeefef; overflow: hidden; }
.bar i { display: block; height: 100%; border-radius: 6px; background: #1d5f70; }
.more { margin-top: auto; font-size: 22px; line-height: 32px; font-weight: 500; color: var(--muted); }

.pair { display: grid; grid-template-columns: 1fr 1fr; gap: 40px; margin: 40px 0; }
.chart { display: block; width: 100%; margin-top: 10px; }
.chart text { stroke: none; }
.donut circle { stroke-width: 48; stroke-linecap: butt; }
.leaders { stroke: #ebeeee; stroke-width: 3; stroke-linecap: butt; }
.pct text, .total-label { font-size: 22px; fill: #6b7b80; }
.total, .total-label { text-anchor: middle; }
.total { font-size: 54px; font-weight: 600; font-variant-numeric: tabular-nums; fill: var(--ink); }
.cloud text { font-weight: 600; }
.gold { fill: #eda100; }
.orange { fill: #eb6834; }
.green { fill: #1baf7a; }
.blue { fill: #2a78d6; }
.pink { fill: #e87ba4; }

/* Word sizes, by number of clients */
.s1 { font-size: 26px; }
.s2 { font-size: 28px; }
.s3 { font-size: 34px; }
.s4 { font-size: 36px; }
.s5 { font-size: 40px; }
.s6 { font-size: 43px; }
.s7 { font-size: 46px; }
.s8 { font-size: 50px; }
.s9 { font-size: 62px; }
```
